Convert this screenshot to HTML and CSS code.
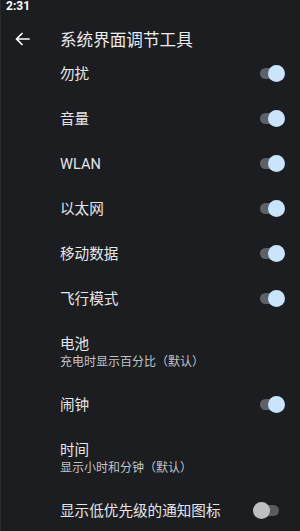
FILE: index.html
```html
<!DOCTYPE html>
<html lang="zh-CN">
<head>
<meta charset="utf-8">
<title>系统界面调节工具</title>
<link rel="stylesheet" href="styles.css">
</head>
<body>
<div class="screen">
  <div class="status">2:31</div>
  <div class="header">
    <div class="back">
      <svg width="20" height="20" viewBox="0 0 20 20"><path d="M16 10H3.5M9 4.5L3.5 10L9 15.5" fill="none" stroke="#ffffff" stroke-width="1.7" stroke-linecap="round" stroke-linejoin="round"/></svg>
    </div>
    <div class="title">系统界面调节工具</div>
  </div>
  <div class="list">
    <div class="row"><span class="label">勿扰</span><span class="toggle on"><span class="track"></span><span class="thumb"></span></span></div>
    <div class="row"><span class="label">音量</span><span class="toggle on"><span class="track"></span><span class="thumb"></span></span></div>
    <div class="row"><span class="label">WLAN</span><span class="toggle on"><span class="track"></span><span class="thumb"></span></span></div>
    <div class="row"><span class="label">以太网</span><span class="toggle on"><span class="track"></span><span class="thumb"></span></span></div>
    <div class="row"><span class="label">移动数据</span><span class="toggle on"><span class="track"></span><span class="thumb"></span></span></div>
    <div class="row"><span class="label">飞行模式</span><span class="toggle on"><span class="track"></span><span class="thumb"></span></span></div>
    <div class="row tall"><div class="texts"><div class="label">电池</div><div class="sub">充电时显示百分比（默认）</div></div></div>
    <div class="row"><span class="label">闹钟</span><span class="toggle on"><span class="track"></span><span class="thumb"></span></span></div>
    <div class="row tall"><div class="texts"><div class="label">时间</div><div class="sub">显示小时和分钟（默认）</div></div></div>
    <div class="row"><span class="label">显示低优先级的通知图标</span><span class="toggle off"><span class="track"></span><span class="thumb"></span></span></div>
  </div>
</div>
</body>
</html>
```
FILE: styles.css
```css
html, body {
  margin: 0;
  padding: 0;
  background: #1c1d20;
}
body {
  font-family: Roboto, "Noto Sans CJK SC", sans-serif;
  color: #e6e6e8;
}
.screen {
  width: 300px;
  height: 531px;
  overflow: hidden;
  box-sizing: border-box;
  border-left: 1px solid #2a2b2e;
  background: #1c1d20;
}
.status {
  height: 14px;
  font-size: 12px;
  line-height: 13px;
  font-weight: 700;
  color: #ffffff;
  padding-left: 5px;
}
.header {
  height: 37px;
  box-sizing: border-box;
  padding-top: 17px;
  display: flex;
  align-items: center;
}
.back {
  width: 20px;
  height: 20px;
  margin-left: 12px;
  margin-bottom: 4px;
}
.back svg { display: block; }
.title {
  margin-left: 27px;
  font-size: 16.6px;
  line-height: 20px;
  color: #ececee;
}
.row {
  height: 45px;
  box-sizing: border-box;
  padding: 0 15px 0 59px;
  display: flex;
  align-items: center;
  justify-content: space-between;
}
.row.tall { height: 61px; }
.label {
  font-size: 14.6px;
  line-height: 20px;
  color: #e6e6e8;
}
.sub {
  font-size: 12px;
  line-height: 16px;
  color: #c2c3c7;
}
.toggle {
  position: relative;
  width: 32px;
  height: 17px;
}
.track {
  position: absolute;
  left: 7px;
  top: 3px;
  width: 19px;
  height: 11px;
  border-radius: 6px;
  background: #5d6268;
}
.thumb {
  position: absolute;
  top: 0;
  width: 17px;
  height: 17px;
  border-radius: 50%;
}
.toggle.on .thumb { left: 15px; background: #c9e4fb; }
.toggle.off .thumb { left: 0; background: #bfbfc1; }
.toggle.off .track { background: #5a5b5e; }
```
